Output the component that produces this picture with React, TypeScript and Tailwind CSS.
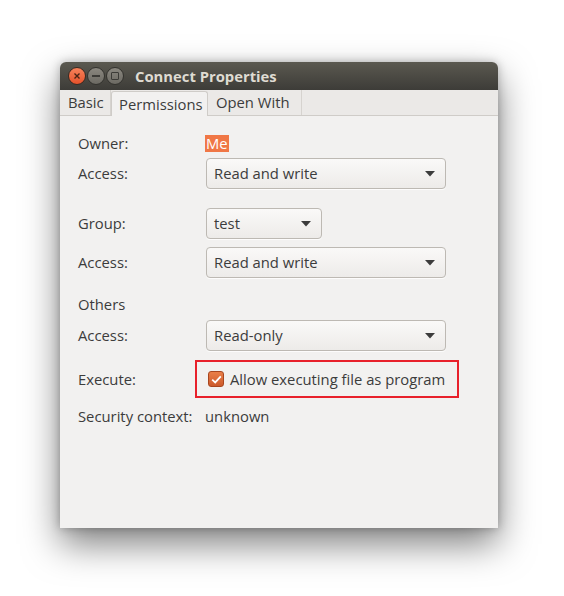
import { ReactNode } from "react";

const font = { fontFamily: '"Open Sans", "DejaVu Sans", sans-serif' };

function Combo({ value, wide = true }: { value: string; wide?: boolean }) {
  return (
    <div
      className={`flex h-[31px] items-center justify-between rounded-[4px] border border-[#bdb9b3] bg-gradient-to-b from-[#faf9f8] to-[#edebe9] pl-[7px] pr-[10px] text-[#3c3c3c] shadow-[0_1px_0_rgba(255,255,255,0.8)] ${
        wide ? "w-[240px]" : "w-[116px]"
      }`}
    >
      <span>{value}</span>
      <svg width="10" height="6" viewBox="0 0 10 6">
        <path d="M0 0 L10 0 L5 5.5 Z" fill="#3c3c3c" />
      </svg>
    </div>
  );
}

function Row({
  label,
  h,
  mt = 0,
  children,
}: {
  label: string;
  h: number;
  mt?: number;
  children?: ReactNode;
}) {
  return (
    <div className="flex items-center" style={{ height: h, marginTop: mt }}>
      <div className="w-[128px] shrink-0">{label}</div>
      <div className="flex items-center">{children}</div>
    </div>
  );
}

export default function App() {
  return (
    <div className="min-h-[596px] w-[564px] bg-white pl-[60px] pt-[62px]" style={font}>
      <div className="flex h-[466px] w-[438px] flex-col rounded-t-[6px] bg-[#f2f1f0] text-[14.8px] text-[#3c3c3c] shadow-[0_16px_36px_rgba(0,0,0,0.5),0_0_10px_rgba(0,0,0,0.25)]">
        {/* Title bar */}
        <div className="flex h-[28px] items-center rounded-t-[6px] bg-gradient-to-b from-[#5b5950] to-[#3d3c38] pl-[8px]">
          <div className="flex items-center gap-[1px]">
            <div className="flex h-[18px] w-[18px] items-center justify-center rounded-full border border-[#3a2a22] bg-gradient-to-b from-[#f7825a] to-[#e5512a]">
              <svg width="8" height="8" viewBox="0 0 8 8">
                <path d="M1.5 1.5 L6.5 6.5 M6.5 1.5 L1.5 6.5" stroke="#4a2414" strokeWidth="1.4" />
              </svg>
            </div>
            <div className="flex h-[18px] w-[18px] items-center justify-center rounded-full border border-[#33322e] bg-gradient-to-b from-[#8a877f] to-[#6c6a63]">
              <div className="h-[1.5px] w-[8px] bg-[#3c3b37]" />
            </div>
            <div className="flex h-[18px] w-[18px] items-center justify-center rounded-full border border-[#33322e] bg-gradient-to-b from-[#8a877f] to-[#6c6a63]">
              <div className="h-[8px] w-[8px] rounded-[1px] border-[1.5px] border-[#3c3b37]" />
            </div>
          </div>
          <div className="ml-[11px] text-[14.8px] font-bold text-[#dfdbd2]">Connect Properties</div>
        </div>

        {/* Tabs */}
        <div className="flex h-[26px] items-end border-b border-[#cfccc8] bg-[#ebe9e7]">
          <div className="flex h-[25px] w-[51px] items-center border-r border-[#d6d3cf] pl-[8px]">Basic</div>
          <div className="-mb-px flex h-[25px] w-[97px] items-center rounded-t-[3px] border border-b-0 border-[#cfccc8] bg-[#f2f1f0] pl-[7px]">
            Permissions
          </div>
          <div className="flex h-[25px] w-[94px] items-center border-r border-[#d6d3cf] pl-[8px]">Open With</div>
        </div>

        {/* Content */}
        <div className="flex flex-col pl-[18px] pt-[16px]">
          <Row label="Owner:" h={22}>
            <span className="-ml-[1px] bg-[#f07746] px-[1px] leading-[17px] text-white">Me</span>
          </Row>
          <Row label="Access:" h={31} mt={4}>
            <Combo value="Read and write" />
          </Row>
          <Row label="Group:" h={31} mt={19}>
            <Combo value="test" wide={false} />
          </Row>
          <Row label="Access:" h={31} mt={8}>
            <Combo value="Read and write" />
          </Row>
          <Row label="Others" h={20} mt={16} />
          <Row label="Access:" h={31} mt={6}>
            <Combo value="Read-only" />
          </Row>
          <Row label="Execute:" h={38} mt={9}>
            <div className="-ml-[11px] flex h-[38px] w-[264px] items-center gap-[6px] border-[2px] border-[#e8212b] pl-[11px]">
              <div className="flex h-[16px] w-[16px] items-center justify-center rounded-[3px] border border-[#a8461f] bg-gradient-to-b from-[#ea7f48] to-[#cc5a2c]">
                <svg width="11" height="9" viewBox="0 0 11 9">
                  <path d="M1.2 4.6 L4.2 7.4 L9.8 1.4" stroke="white" strokeWidth="1.8" fill="none" />
                </svg>
              </div>
              <span>Allow executing file as program</span>
            </div>
          </Row>
          <Row label="Security context:" h={20} mt={8}>
            <span className="-ml-[1px]">unknown</span>
          </Row>
        </div>
      </div>
    </div>
  );
}
